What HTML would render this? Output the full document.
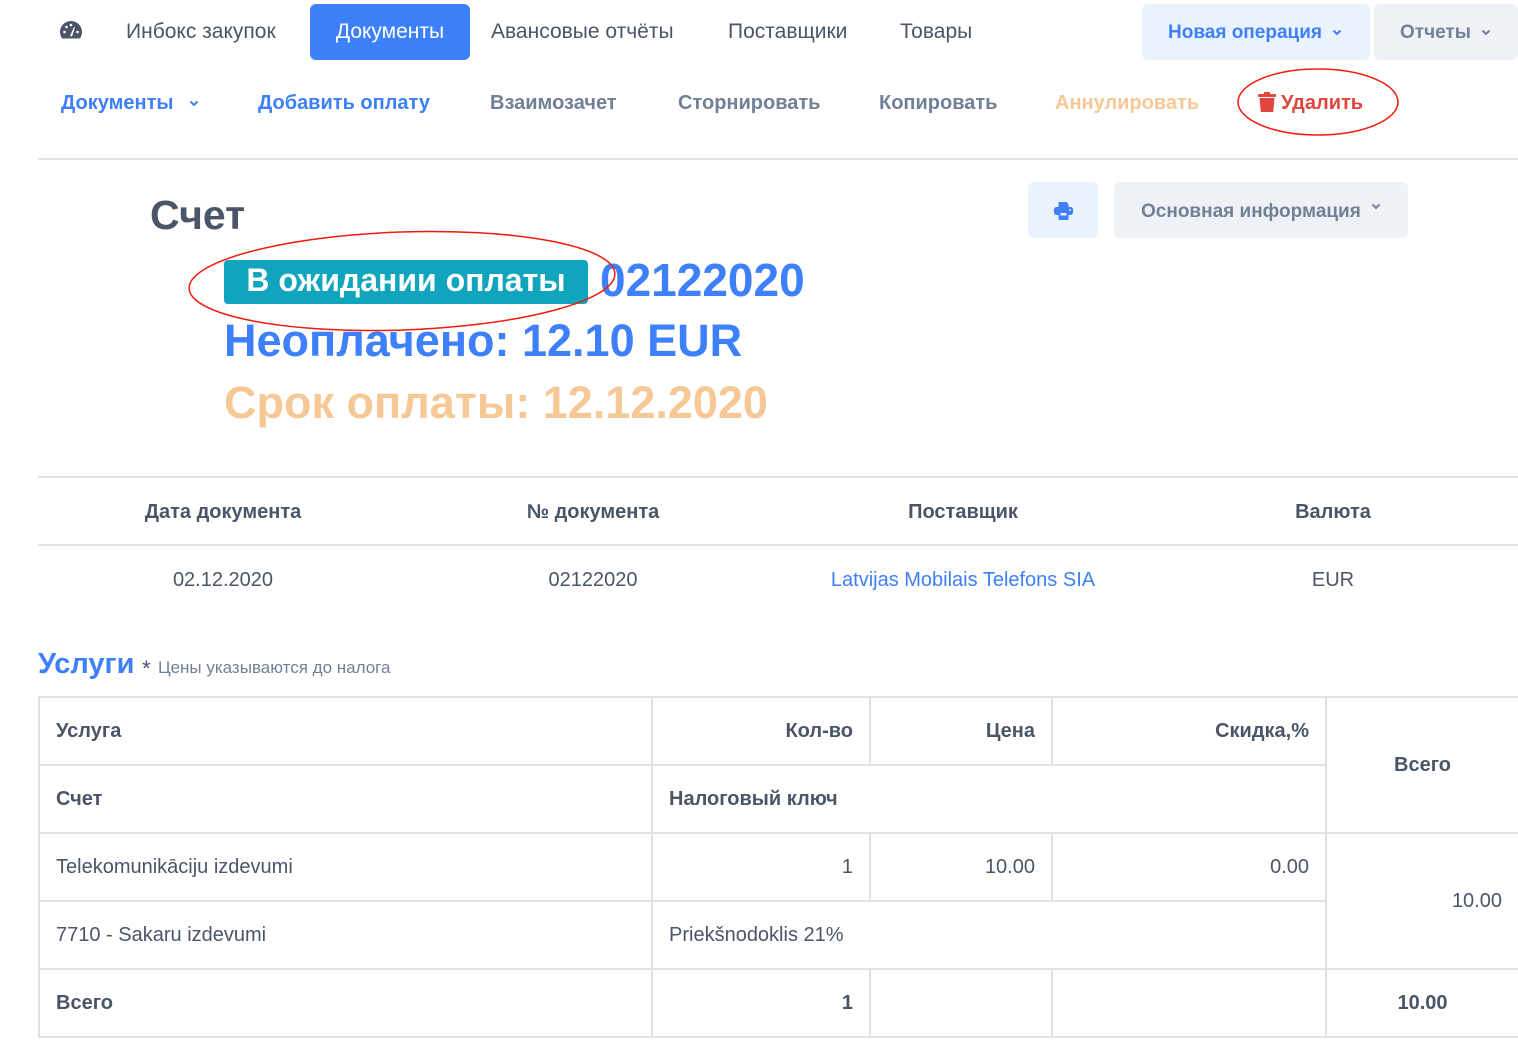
<!DOCTYPE html>
<html><head><meta charset="utf-8"><style>
*{margin:0;padding:0;box-sizing:border-box}
body{width:1518px;height:1048px;background:#fff;position:relative;overflow:hidden;font-family:"Liberation Sans","DejaVu Sans",sans-serif;color:#4a5568}
.a{position:absolute;white-space:nowrap}
.nav{font-size:21px;color:#4a5568;top:20px}
.sub{font-size:20px;font-weight:bold;top:92px;color:#718096}
.btn{position:absolute;border-radius:6px}
.hr{position:absolute;left:38px;width:1480px;height:2px;background:#dee2e6}
table{position:absolute;left:38px;top:696px;border-collapse:collapse;table-layout:fixed;width:1480px}
td{border:2px solid #dee2e6;height:68px;font-size:20px;padding:0 16px;color:#4a5568}
.b{font-weight:bold}
.r{text-align:right}
.c{text-align:center}
.ih{font-size:20px;font-weight:bold;top:501px;width:370px;text-align:center}
.iv{font-size:20px;top:569px;width:370px;text-align:center}
.chev{display:inline-block;vertical-align:middle;margin-left:10px}
</style></head><body>
<svg class="a" style="left:59px;top:20px" width="24" height="20" viewBox="0 0 24 20"><path d="M12 1A11 11 0 0 0 1 12c0 2.5.8 4.7 2.2 6.5h17.6A11 11 0 0 0 23 12 11 11 0 0 0 12 1z" fill="#4a5568"/><circle cx="5.5" cy="12" r="1.3" fill="#fff"/><circle cx="7.5" cy="7" r="1.3" fill="#fff"/><circle cx="12" cy="5" r="1.3" fill="#fff"/><circle cx="18.5" cy="12" r="1.3" fill="#fff"/><path d="M11 16l4-9 1 .5-3 9z" fill="#fff"/></svg>
<span class="a nav" style="left:126px">Инбокс закупок</span>
<div class="btn" style="left:310px;top:4px;width:160px;height:56px;background:#3d80fa"></div>
<span class="a nav" style="left:310px;width:160px;text-align:center;color:#fff">Документы</span>
<span class="a nav" style="left:491px">Авансовые отчёты</span>
<span class="a nav" style="left:728px">Поставщики</span>
<span class="a nav" style="left:900px">Товары</span>
<div class="btn" style="left:1142px;top:4px;width:228px;height:56px;background:#eaf2fe"></div>
<span class="a" style="left:1168px;top:22px;font-size:19px;font-weight:bold;color:#3d80fa">Новая операция<svg class="chev" width="10" height="7" viewBox="0 0 10 7"><path d="M1.5 1.5L5 5l3.5-3.5" fill="none" stroke="#3d80fa" stroke-width="2"/></svg></span>
<div class="btn" style="left:1374px;top:4px;width:144px;height:56px;background:#eef2f6"></div>
<span class="a" style="left:1400px;top:22px;font-size:19px;font-weight:bold;color:#718096">Отчеты<svg class="chev" width="10" height="7" viewBox="0 0 10 7"><path d="M1.5 1.5L5 5l3.5-3.5" fill="none" stroke="#718096" stroke-width="2"/></svg></span>

<span class="a sub" style="left:61px;color:#3d80fa">Документы<svg class="chev" style="margin-left:16px" width="10" height="7" viewBox="0 0 10 7"><path d="M1.5 1.5L5 5l3.5-3.5" fill="none" stroke="#3d80fa" stroke-width="2"/></svg></span>
<span class="a sub" style="left:258px;color:#3d80fa">Добавить оплату</span>
<span class="a sub" style="left:490px">Взаимозачет</span>
<span class="a sub" style="left:678px">Сторнировать</span>
<span class="a sub" style="left:879px">Копировать</span>
<span class="a sub" style="left:1055px;color:#f6c896">Аннулировать</span>
<svg class="a" style="left:1258px;top:92px" width="18" height="21" viewBox="0 0 18 21"><rect x="0" y="2" width="18" height="3" rx="1" fill="#e0463d"/><rect x="6" y="0" width="6" height="3" fill="#e0463d"/><path d="M1.5 6h15l-1.3 14H2.8z" fill="#e0463d"/></svg>
<span class="a sub" style="left:1281px;color:#e0463d">Удалить</span>
<svg class="a" style="left:1236px;top:67px" width="166" height="70"><ellipse cx="82" cy="35" rx="80" ry="33" fill="none" stroke="#f21a0b" stroke-width="1.5"/></svg>
<div class="hr" style="top:158px"></div>

<span class="a" style="left:150px;top:192px;font-size:41px;font-weight:bold;color:#4a5568">Счет</span>
<div class="btn" style="left:1028px;top:182px;width:70px;height:56px;background:#eaf2fe"></div>
<svg class="a" style="left:1054px;top:202px" width="19" height="18" viewBox="0 0 19 18"><path d="M4.5 0h8l2 2v4h-10z" fill="#3d80fa"/><rect x="0" y="5" width="19" height="8" rx="2.5" fill="#3d80fa"/><rect x="4.5" y="10" width="10" height="8" rx="1" fill="#3d80fa"/><rect x="6.5" y="11" width="6" height="2.5" fill="#eaf2fe"/><circle cx="16" cy="8" r="1" fill="#eaf2fe"/></svg>
<div class="btn" style="left:1114px;top:182px;width:294px;height:56px;background:#eef2f6"></div>
<span class="a" style="left:1141px;top:201px;font-size:19px;font-weight:bold;color:#718096">Основная информация<svg class="chev" style="margin-top:-10px" width="10" height="7" viewBox="0 0 10 7"><path d="M1.5 1.5L5 5l3.5-3.5" fill="none" stroke="#718096" stroke-width="2"/></svg></span>

<div class="btn" style="left:224px;top:260px;width:364px;height:44px;background:#10a5bc;border-radius:4px"></div>
<span class="a" style="left:224px;width:364px;text-align:center;top:262px;font-size:32px;font-weight:bold;color:#fff">В ожидании оплаты</span>
<span class="a" style="left:600px;top:253px;font-size:46px;font-weight:bold;color:#3d80fa">02122020</span>
<span class="a" style="left:224px;top:315px;font-size:45px;font-weight:bold;color:#3d80fa">Неоплачено: 12.10 EUR</span>
<span class="a" style="left:224px;top:377px;font-size:45px;font-weight:bold;color:#f6c896">Срок оплаты: 12.12.2020</span>
<svg class="a" style="left:186px;top:229px" width="432" height="104"><ellipse cx="216" cy="52" rx="213" ry="49" fill="none" stroke="#f21a0b" stroke-width="1.5" transform="rotate(-2 216 52)"/></svg>

<div class="hr" style="top:476px"></div>
<div class="hr" style="top:544px"></div>
<span class="a ih" style="left:38px">Дата документа</span>
<span class="a ih" style="left:408px">№ документа</span>
<span class="a ih" style="left:778px">Поставщик</span>
<span class="a ih" style="left:1148px">Валюта</span>
<span class="a iv" style="left:38px">02.12.2020</span>
<span class="a iv" style="left:408px">02122020</span>
<span class="a iv" style="left:778px;color:#3d80fa">Latvijas Mobilais Telefons SIA</span>
<span class="a iv" style="left:1148px">EUR</span>

<span class="a" style="left:38px;top:648px;font-size:29px;font-weight:bold;color:#3d80fa">Услуги</span>
<span class="a" style="left:142px;top:656px;font-size:22px;color:#4a5568">*</span>
<span class="a" style="left:158px;top:658px;font-size:17px;color:#718096">Цены указываются до налога</span>

<table>
<colgroup><col style="width:613px"><col style="width:218px"><col style="width:182px"><col style="width:274px"><col style="width:193px"></colgroup>
<tr><td class="b">Услуга</td><td class="b r">Кол-во</td><td class="b r">Цена</td><td class="b r">Скидка,%</td><td class="b c" rowspan="2">Всего</td></tr>
<tr><td class="b">Счет</td><td class="b" colspan="3">Налоговый ключ</td></tr>
<tr><td>Telekomunikāciju izdevumi</td><td class="r">1</td><td class="r">10.00</td><td class="r">0.00</td><td class="r" rowspan="2">10.00</td></tr>
<tr><td>7710 - Sakaru izdevumi</td><td colspan="3">Priekšnodoklis 21%</td></tr>
<tr><td class="b">Всего</td><td class="b r">1</td><td></td><td></td><td class="b c">10.00</td></tr>
</table>
</body></html>
